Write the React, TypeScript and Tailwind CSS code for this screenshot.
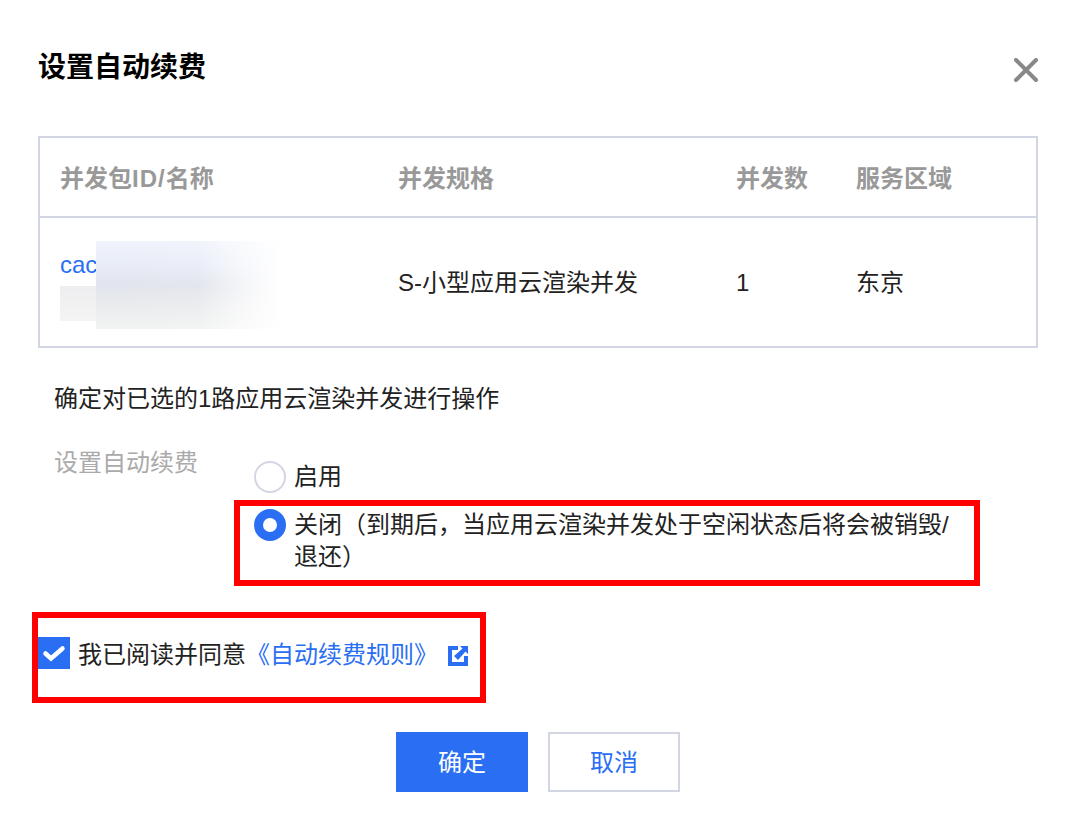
export default function App() {
  return (
    <div className="relative w-[1080px] h-[818px] bg-white overflow-hidden px-[38px] text-[24px] leading-[32px] text-[#222] font-['Liberation_Sans','Noto_Sans_CJK_SC',sans-serif]">
      <div className="flex items-start justify-between h-[136px] pt-[52px]">
        <h1 className="text-[28px] leading-[32px] font-bold text-black">设置自动续费</h1>
        <svg width="24" height="24" viewBox="0 0 24 24" className="mt-[6px] mr-[4px]" fill="none" stroke="#888" strokeWidth="4" strokeLinecap="round">
          <path d="M2 2 22 22M22 2 2 22" />
        </svg>
      </div>

      <div className="w-[1000px] h-[212px] border-2 border-[#d1d6e2] flex flex-col">
        <div className="h-[80px] pt-[4px] border-b-2 border-[#d1d6e2] grid grid-cols-[338px_338px_120px_1fr] pl-5 items-center font-bold text-[#999]">
          <div>并发包<span className="tracking-[1px]">ID/</span>名称</div>
          <div>并发规格</div>
          <div>并发数</div>
          <div>服务区域</div>
        </div>
        <div className="relative flex-1 pt-[2px] grid grid-cols-[338px_338px_120px_1fr] pl-5 items-center">
          <div className="text-[#2a6ff3] -mt-[36px]">cac</div>
          <div>S-小型应用云渲染并发</div>
          <div>1</div>
          <div>东京</div>
          <div className="absolute left-[56px] top-[23px] w-[184px] h-[88px] bg-[linear-gradient(to_bottom,#f0f3fb_0%,#e9edf7_25%,#e1e4ed_50%,#ebecee_75%,#f2f3f3_100%)]">
            <div className="w-full h-full bg-[linear-gradient(to_right,rgba(255,255,255,0)_0%,rgba(255,255,255,0.05)_55%,rgba(255,255,255,0.6)_78%,#ffffff_100%)]"></div>
          </div>
          <div className="absolute left-[20px] top-[68px] w-[36px] h-[35px] bg-[linear-gradient(to_bottom,#eeeef0,#f4f4f4)]"></div>
        </div>
      </div>

      <div className="mt-[35px] pl-[16px]">确定对已选的1路应用云渲染并发进行操作</div>

      <div className="mt-[32px] pl-[16px] flex">
        <div className="w-[200px] text-[#aaa] shrink-0">设置自动续费</div>
        <div className="flex flex-col gap-[16px] mt-[-2px]">
          <div className="mt-[16px] flex items-start gap-[8px]">
            <span className="w-[32px] h-[32px] rounded-full border-2 border-[#d1d6e2] shrink-0"></span>
            <span>启用</span>
          </div>
          <div className="flex items-start gap-[8px] w-[700px]">
            <span className="w-[32px] h-[32px] rounded-full border-[9px] border-[#2a6ff3] shrink-0"></span>
            <span className="w-[660px]">关闭（到期后，当应用云渲染并发处于空闲状态后将会被销毁/退还）</span>
          </div>
        </div>
      </div>

      <div className="mt-[64px] flex items-start">
        <span className="w-[32px] h-[32px] bg-[#2a6ff3] shrink-0">
          <svg width="32" height="32" viewBox="0 0 32 32" fill="none" stroke="#fff" strokeWidth="4.500" strokeLinecap="round">
            <path d="M7.500 16.500 13 21.500 24.500 11.500" />
          </svg>
        </span>
        <span className="ml-[8px] pt-[2px]">我已阅读并同意</span>
        <span className="pt-[2px] text-[#2a6ff3]">《自动续费规则》</span>
        <svg width="20" height="20" viewBox="0 0 20 20" className="ml-[10px] mt-[9px]">
          <path fill="#2a6ff3" d="M0 0H10V4H4V16H16V10H20V20H0Z M12 0H20V8L17.500 5.500 10 14 6 10 14.500 2.500Z" />
        </svg>
      </div>

      <div className="mt-[61px] flex justify-center gap-[20px] pr-[4px]">
        <button className="w-[132px] h-[60px] pt-[2px] bg-[#2a6ff3] text-white">确定</button>
        <button className="w-[132px] h-[60px] pt-[2px] border-2 border-[#d1d6e2] bg-white text-[#2a6ff3]">取消</button>
      </div>

      <div className="absolute left-[234px] top-[500px] w-[746px] h-[86px] border-[6px] border-[#ff0000]"></div>
      <div className="absolute left-[32px] top-[612px] w-[454px] h-[91px] border-[6px] border-[#ff0000]"></div>
    </div>
  );
}
